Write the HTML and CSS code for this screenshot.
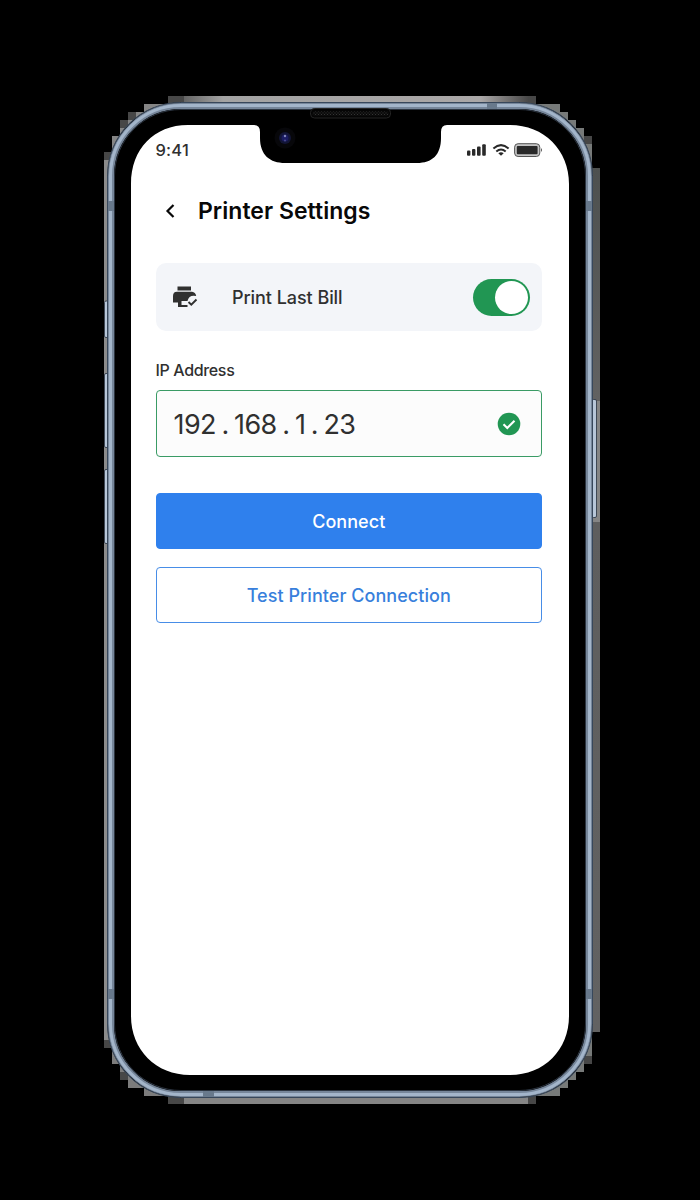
FILE: index.html
```
<!DOCTYPE html>
<html lang="en">
<head>
<meta charset="utf-8">
<title>Printer Settings</title>
<link rel="stylesheet" href="styles.css">
</head>
<body>
<div class="stage">
  <svg class="device" viewBox="0 0 700 1200" aria-hidden="true">
    <defs>
      <pattern id="mesh" width="3" height="3" patternUnits="userSpaceOnUse"><rect width="3" height="3" fill="#0b0b0b"/><rect width="1" height="1" fill="#343434"/><rect x="1.5" y="1.5" width="1" height="1" fill="#303030"/></pattern>
      <linearGradient id="topHalo"><stop offset="0" stop-color="#4b4b4b"/><stop offset=".15" stop-color="#a3a3a3"/><stop offset=".85" stop-color="#aaa7a7"/><stop offset="1" stop-color="#383838"/></linearGradient>
      <linearGradient id="rightHalo" x2="0" y2="1"><stop offset="0" stop-color="#4d504f"/><stop offset=".27" stop-color="#626262"/><stop offset=".27" stop-color="#858585"/><stop offset=".41" stop-color="#858585"/><stop offset=".41" stop-color="#5e5e5e"/><stop offset="1" stop-color="#626262"/></linearGradient>
    </defs>
    <!-- stepped halo -->
    <g shape-rendering="crispEdges">
      <path fill="url(#topHalo)" d="M168 96H536V104H168Z"/>
      <path fill="#858585" d="M168 1096H536V1104H168Z"/>
      <path fill="#8b8b8b" d="M104 152H112V1048H104Z"/>
      <path fill="url(#rightHalo)" d="M584 168H600V1032H584Z"/>
      <path fill="#858585" d="M144 104H180V112H160V120H144V136H136V152H128V180H112V136H120V120H128V112H144Z"/>
      <path fill="#777a79" d="M520 104H560V112H568V120H576V128H584V136H592V168H570V140L520 112Z"/>
      <path fill="#7c7c7c" d="M180 1096H144V1088H128V1080H120V1064H112V1040H130L180 1080Z"/>
      <path fill="#777a79" d="M520 1096H560V1088H568V1080H576V1072H584V1064H592V1032H570L520 1080Z"/>
      <path fill="#474747" d="M104 152h8v8h-8zM120 120h8v8h-8zM128 112h8v8h-8zM168 96h16v8h-16zM584 136h8v8h-8zM528 96h8v8h-8zM104 1040h8v8h-8zM120 1072h8v8h-8zM168 1096h16v8h-16zM584 1056h8v8h-8zM528 1096h8v8h-8z"/>
    </g>
    <!-- side buttons -->
    <g fill="#b7c6d8" stroke="#26303d" stroke-width=".8">
      <rect x="104.500" y="301" width="4" height="36.500" rx="1.500"/>
      <rect x="104.500" y="373.500" width="4" height="74" rx="1.500"/>
      <rect x="104.500" y="469.500" width="4" height="74" rx="1.500"/>
      <rect x="592" y="399.500" width="4.500" height="118" rx="1.500"/>
    </g>
    <!-- metal frame -->
    <rect x="107.500" y="102.500" width="485" height="995" rx="73" fill="#000" stroke="#37475b"/>
    <rect x="111" y="106" width="478" height="988" rx="70" fill="none" stroke="#76869a" stroke-width="6"/>
    <rect x="110.500" y="105.500" width="479" height="989" rx="70.500" fill="none" stroke="#a3b5ca" stroke-width="3"/>
    <rect x="114.500" y="109.500" width="471" height="981" rx="66.500" fill="none" stroke="#2c3541"/>
    <g fill="#68798c">
      <path d="M108 201h6v10h-6zM586 201h6v10h-6zM108 989h6v10h-6zM586 989h6v10h-6zM487 103h10v6h-10zM203 1091h11v6h-11z"/>
    </g>
    <path fill="#fff" d="M188 125H254Q260 125 260 132V138C260 155 270 163 285 163H417C432 163 441 155 441 138V132Q441 125 447 125H510C544 125 569 150 569 184V1016C569 1050 544 1075 510 1075H190C156 1075 131 1050 131 1016V184C131 149 154 125 188 125Z"/>
    <rect x="310.500" y="108.500" width="80" height="9.500" rx="4" fill="#050505" stroke="#242424"/>
    <rect x="312.500" y="111.500" width="76" height="4" rx="2" fill="url(#mesh)"/>
    <circle cx="285" cy="138" r="10.500" fill="#07070a"/><circle cx="285" cy="138" r="6" fill="#121536"/>
    <circle cx="285" cy="138" r="3.500" fill="#1b1c62"/><circle cx="285" cy="136" r="1.200" fill="#8286b8"/><circle cx="285" cy="140.500" r="1" fill="#4b4c8d"/>
  </svg>

  <main class="screen">
    <div class="status">
      <span class="time">9:41</span>
      <svg class="status-icons" viewBox="0 0 78 18" aria-hidden="true">
        <g fill="#292929"><rect x="2" y="10.500" width="3.400" height="5.200" rx="1"/><rect x="7" y="9" width="3.400" height="6.700" rx="1"/><rect x="12" y="6.500" width="3.600" height="9.200" rx="1"/><rect x="17.200" y="4.300" width="3.600" height="11.400" rx="1"/></g>
        <g fill="none" stroke="#292929" stroke-width="2"><path d="M28.400 8.400Q36 1.800 43.600 8.400"/><path d="M31.300 11.500Q36 7.400 40.700 11.500"/></g><path fill="#292929" d="M33.300 13.200Q36 11.200 38.700 13.200L36 15.700Z"/>
        <rect x="49.600" y="3.700" width="25.200" height="12.800" rx="3.500" fill="#c4c4c4" stroke="#555" stroke-width="1"/><rect x="51.800" y="6" width="20.800" height="8.200" rx="1" fill="#292929"/><path fill="#555" d="M76 8q2 2 0 4z"/>
      </svg>
    </div>
    <header class="header">
      <svg class="back" viewBox="0 0 10 16" aria-hidden="true"><path d="M8.500 2L2.500 8L8.500 14" fill="none" stroke="#080808" stroke-width="2.200"/></svg>
      <h1>Printer Settings</h1>
    </header>
    <section class="option">
      <svg class="printer" viewBox="0 0 26 24" aria-hidden="true">
        <path fill="#303030" d="M5.500 1.500H19V5.500H5.500ZM5 6.700H20Q23.500 7 24.200 11Q17 9.500 15.500 16H9.500V20H15.500V22H6V17.500H1V11Q1 6.700 5 6.700Z"/>
        <path d="M16.500 17L19.300 19.700L24.500 14.500" fill="none" stroke="#303030" stroke-width="1.900"/>
      </svg>
      <span class="option-label">Print Last Bill</span>
      <span class="toggle"><span class="knob"></span></span>
    </section>
    <div class="label">IP Address</div>
    <div class="field">
      <span class="ip"><span>192</span><span>.</span><span>168</span><span>.</span><span>1</span><span>.</span><span>23</span></span>
      <svg class="check" viewBox="0 0 24 24" aria-hidden="true"><circle cx="12" cy="12" r="11.300" fill="#219653"/><path d="M6.500 12.200L10.300 16L17.500 8.700" fill="none" stroke="#fff" stroke-width="2.100"/></svg>
    </div>
    <button class="button primary"><span>Connect</span></button>
    <button class="button secondary"><span>Test Printer Connection</span></button>
  </main>
</div>
</body>
</html>
```
FILE: styles.css
```
* { box-sizing: border-box; }
body { margin: 0; background: #000; font-family: Inter, "Liberation Sans", sans-serif; color: #303030; }
.stage { display: grid; width: 700px; height: 1200px; overflow: hidden; }
.device, .screen { grid-area: 1 / 1; }
.device { width: 700px; height: 1200px; }
.screen { display: flex; flex-direction: column; z-index: 1; width: 386.500px; margin: 140px 0 125px 155.500px; }
.status { display: flex; justify-content: space-between; height: 20px; }
.time { font-size: 16.500px; line-height: 20px; font-weight: 500; letter-spacing: .2px; }
.status-icons { width: 78px; height: 18px; margin-right: -.5px; }
.header { display: flex; align-items: center; height: 32px; margin-top: 35px; padding-left: 9px; }
.back { width: 10px; height: 16px; }
h1 { margin: 0 0 0 23.500px; font-size: 23px; line-height: 32px; font-weight: 600; letter-spacing: .03px; color: #080808; white-space: nowrap; }
.option { display: flex; align-items: center; height: 68px; margin-top: 36px; padding: 0 12.500px 0 16px; border-radius: 10px; background: #f3f5f9; }
.printer { width: 26px; height: 24px; }
.option-label { margin-left: 34.500px; font-size: 18px; font-weight: 500; letter-spacing: -.06px; }
.toggle { display: flex; justify-content: flex-end; align-items: center; width: 57px; height: 37px; margin-left: auto; padding-right: 2px; border-radius: 19px; background: #219653; }
.knob { width: 33px; height: 33px; border-radius: 50%; background: #fff; }
.label { height: 20px; margin-top: 29px; font-size: 16px; line-height: 20px; font-weight: 500; letter-spacing: -.35px; }
.field { display: flex; align-items: center; height: 67px; margin-top: 10px; padding: 0 20.500px 0 17px; border: 1.500px solid #3a9b65; border-radius: 4px; background: #fcfcfc; }
.ip { display: flex; gap: 5.500px; margin-top: 2px; font-size: 27px; line-height: 34px; letter-spacing: -.6px; }
.check { width: 24px; height: 24px; margin-left: auto; }
.button { height: 56px; border-radius: 4px; font: 500 18px Inter, sans-serif; letter-spacing: .05px; }
.primary { margin: 35.500px 0 0; padding-top: 2px; border: 1px solid #2f80ed; background: #2f80ed; color: #fff; }
.secondary { margin: 18px 0 0; padding-top: 2px; border: 1.500px solid #478de7; background: #fff; color: #387fdc; }
```
